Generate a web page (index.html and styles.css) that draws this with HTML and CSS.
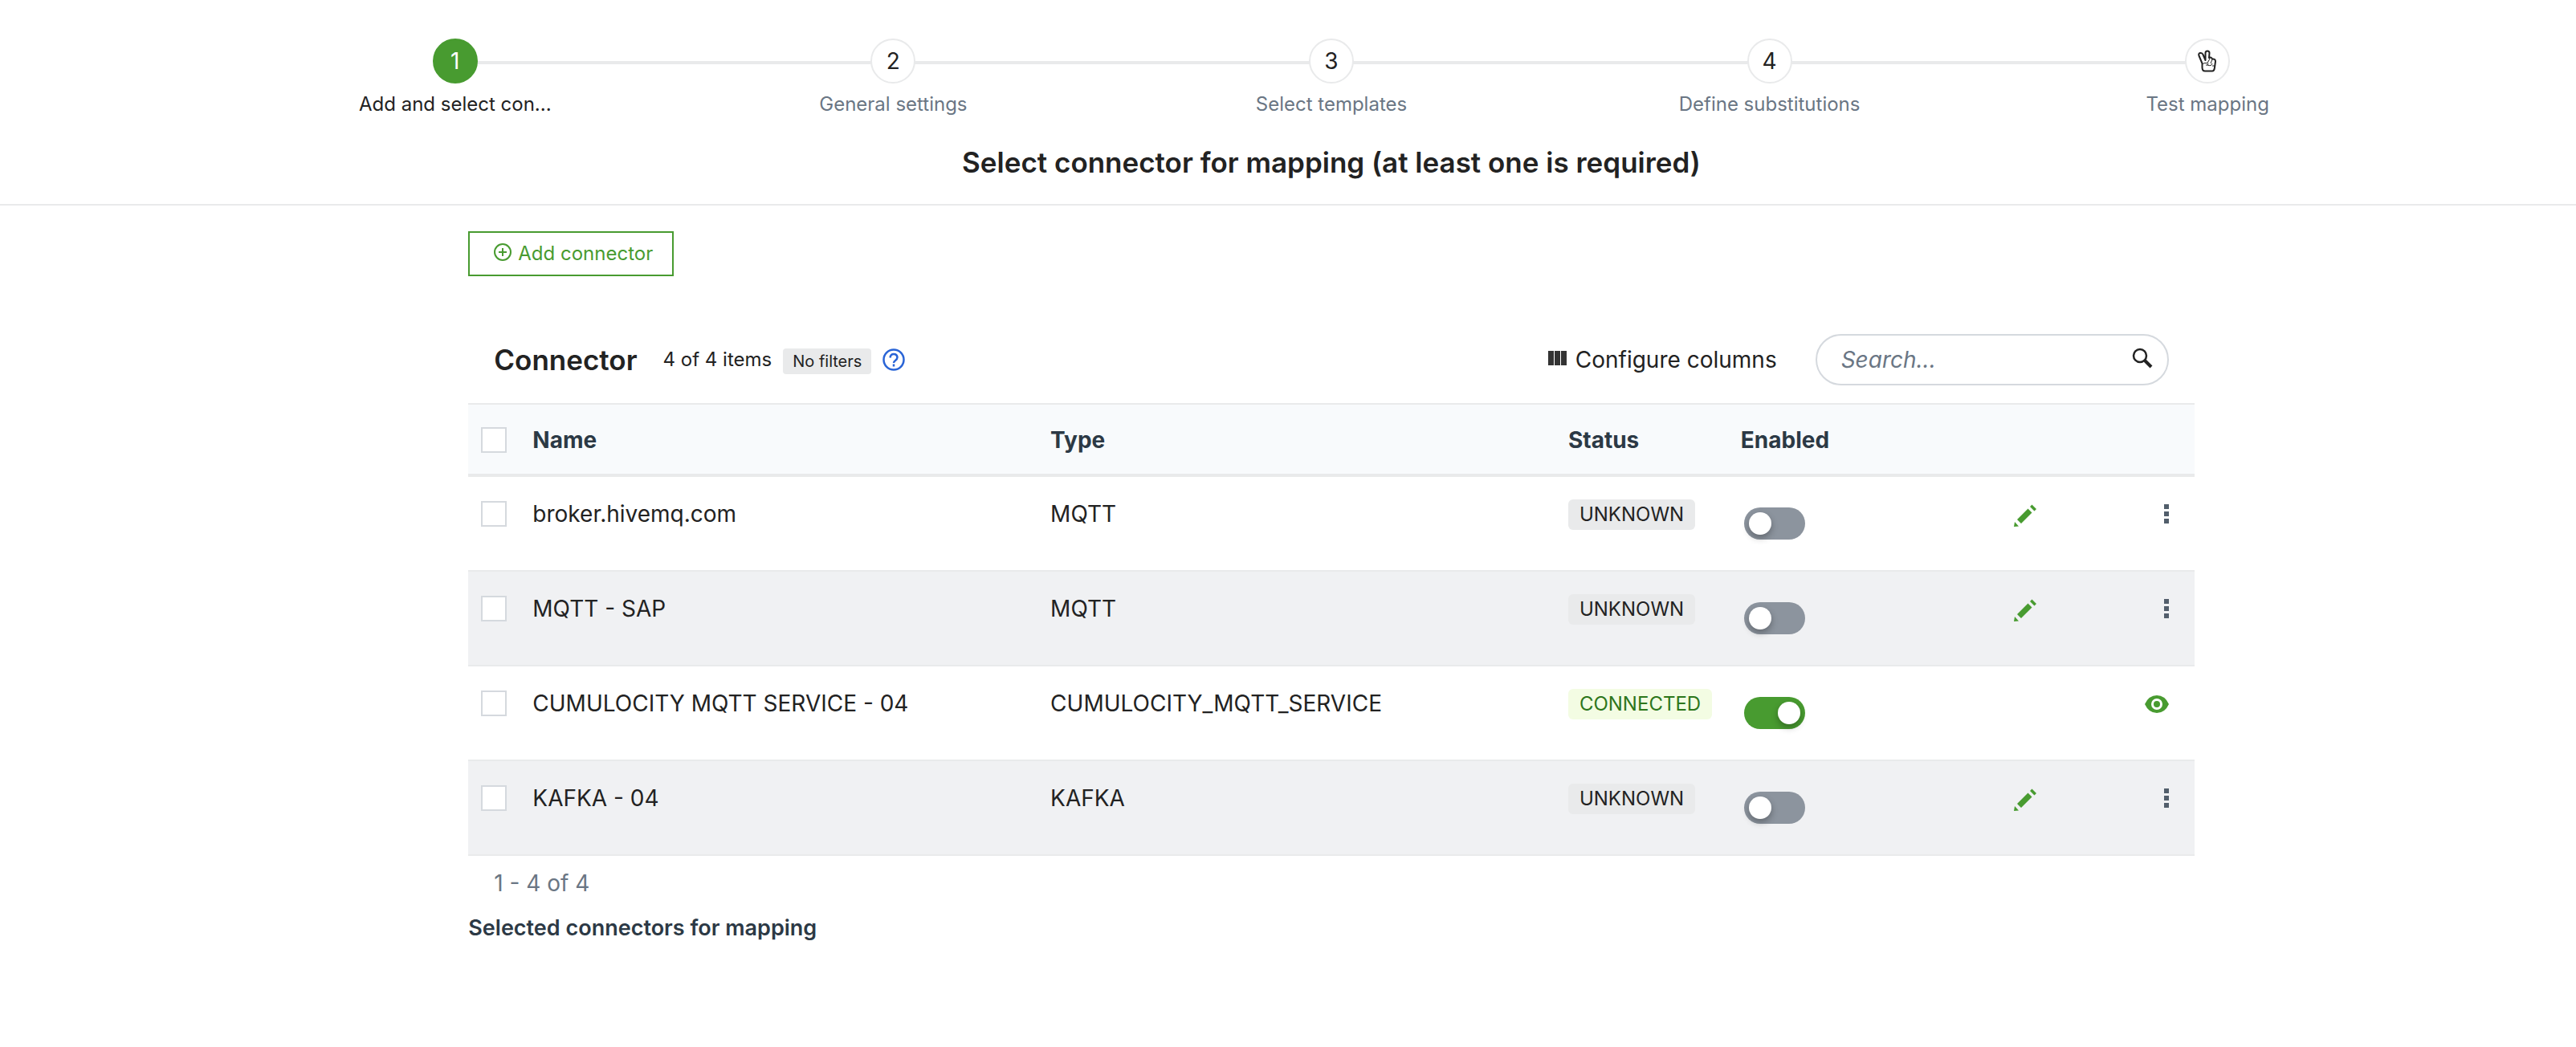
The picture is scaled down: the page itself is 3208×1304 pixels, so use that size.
FILE: index.html
```html
<!DOCTYPE html>
<html lang="en">
<head>
<meta charset="utf-8">
<title>Select connector for mapping</title>
<link rel="stylesheet" href="styles.css">
</head>
<body>
<svg class="sprite" aria-hidden="true">
  <symbol id="pencil" viewBox="0 0 28 28"><path d="M0 28l1-6 5 5.500zM4 19L17.500 5.500l5 5L9 24zM20 3l2.500-2.500 5.500 5.500-2.500 2.500z"/></symbol>
  <symbol id="dots" viewBox="0 0 6 24"><path d="M0 0h6v6H0zM0 9h6v6H0zM0 18h6v6H0z"/></symbol>
</svg>
<header class="header">
  <ol class="stepper">
    <li class="step active"><button class="step-dot" aria-labelledby="s1">1</button><span class="step-label" id="s1">Add and select con...</span></li>
    <li class="step"><button class="step-dot" aria-labelledby="s2">2</button><span class="step-label" id="s2">General settings</span></li>
    <li class="step"><button class="step-dot" aria-labelledby="s3">3</button><span class="step-label" id="s3">Select templates</span></li>
    <li class="step"><button class="step-dot" aria-labelledby="s4">4</button><span class="step-label" id="s4">Define substitutions</span></li>
    <li class="step"><button class="step-dot" aria-labelledby="s5"><svg class="hand" viewBox="0 0 24 28"><path class="outline" d="M5.500 17L1.500 7.500Q0.500 4.500 3 4T6.500 6L9.500 13V4Q9.500 1.500 12 1.500T14.500 4L14 10Q17 8.500 18 11.500 22 11 22 14.500L21 22Q20.500 26.500 18 26.500H9Q5.500 26.500 5.500 22z"/><path class="crease" d="M5.500 18Q7 16 12 16.500L15 11M12 16.500Q14 18 12 19H10M12 19Q17 21 18 17M18 12L16 17M21 20L18 20"/></svg></button><span class="step-label" id="s5">Test mapping</span></li>
  </ol>
  <h1 class="page-title">Select connector for mapping (at least one is required)</h1>
</header>
<main class="content">
  <button class="add"><svg class="add-icon" viewBox="0 0 22 22"><circle cx="11" cy="11" r="10"/><path d="M11 6v10M6 11h10"/></svg>Add connector</button>
  <section class="grid">
    <div class="toolbar">
      <h2 class="grid-title">Connector</h2>
      <span class="count">4 of 4 items</span>
      <span class="filters">No filters</span>
      <button class="plain help" aria-label="Help"><svg class="help-icon" viewBox="0 0 28 28"><circle cx="14" cy="14" r="12.500"/><path d="M9.500 11.500Q10 7 14 7t4.500 4q0 2-2.500 4-2 1.500-2 3M14 19.500v3"/></svg></button>
      <button class="plain configure"><svg class="columns-icon" viewBox="0 0 24 18"><path d="M0 0h7v18H0zM8 0h7v18H8zM16 0h7v18h-7z"/></svg>Configure columns</button>
      <label class="search"><input class="search-input" type="text" placeholder="Search..." aria-label="Search"><svg class="search-icon" viewBox="0 0 26 26"><circle cx="10" cy="10" r="8"/><path class="handle" d="M16 16l8 8"/></svg></label>
    </div>
    <table class="table">
      <colgroup><col class="c-check"><col class="c-name"><col class="c-type"><col class="c-status"><col class="c-enabled"><col class="c-edit"><col class="c-more"></colgroup>
      <thead><tr><th><input class="check" type="checkbox" aria-label="Select all"></th><th>Name</th><th>Type</th><th>Status</th><th>Enabled</th><th></th><th></th></tr></thead>
      <tbody>
        <tr><td><input class="check" type="checkbox" aria-label="Select broker.hivemq.com"></td><td>broker.hivemq.com</td><td>MQTT</td><td><span class="tag">UNKNOWN</span></td><td><input class="switch" type="checkbox" aria-label="Enable broker.hivemq.com"></td><td><button class="plain" aria-label="Edit"><svg class="pencil"><use href="#pencil"/></svg></button></td><td class="more"><button class="plain" aria-label="More"><svg class="dots"><use href="#dots"/></svg></button></td></tr>
        <tr><td><input class="check" type="checkbox" aria-label="Select MQTT - SAP"></td><td>MQTT - SAP</td><td>MQTT</td><td><span class="tag">UNKNOWN</span></td><td><input class="switch" type="checkbox" aria-label="Enable MQTT - SAP"></td><td><button class="plain" aria-label="Edit"><svg class="pencil"><use href="#pencil"/></svg></button></td><td class="more"><button class="plain" aria-label="More"><svg class="dots"><use href="#dots"/></svg></button></td></tr>
        <tr><td><input class="check" type="checkbox" aria-label="Select CUMULOCITY MQTT SERVICE - 04"></td><td>CUMULOCITY MQTT SERVICE - 04</td><td>CUMULOCITY_MQTT_SERVICE</td><td><span class="tag connected">CONNECTED</span></td><td><input class="switch" type="checkbox" checked aria-label="Enable CUMULOCITY MQTT SERVICE - 04"></td><td></td><td class="more"><button class="plain" aria-label="View"><svg class="eye" viewBox="0 0 30 22"><path fill-rule="evenodd" d="M0 11Q5 0 15 0t15 11q-5 11-15 11T0 11zM15 4a7 7 0 1 0 0 14 7 7 0 1 0 0-14z"/><circle cx="15" cy="11" r="4"/></svg></button></td></tr>
        <tr><td><input class="check" type="checkbox" aria-label="Select KAFKA - 04"></td><td>KAFKA - 04</td><td>KAFKA</td><td><span class="tag">UNKNOWN</span></td><td><input class="switch" type="checkbox" aria-label="Enable KAFKA - 04"></td><td><button class="plain" aria-label="Edit"><svg class="pencil"><use href="#pencil"/></svg></button></td><td class="more"><button class="plain" aria-label="More"><svg class="dots"><use href="#dots"/></svg></button></td></tr>
      </tbody>
    </table>
    <p class="pager">1 - 4 of 4</p>
  </section>
  <h3 class="selected-title">Selected connectors for mapping</h3>
</main>
</body>
</html>
```
FILE: styles.css
```css
* { box-sizing: border-box; }
body { margin: 0; background: #fff; color: #222; font: 28px/40px Inter, "Liberation Sans", sans-serif; }
button, input { font: inherit; color: inherit; }
h1, h2, h3, p, ol { margin: 0; padding: 0; }
.sprite { display: none; }
.plain { display: inline-flex; align-items: center; padding: 0; border: 0; background: none; }

.header { padding: 48px 0 28px 108px; border-bottom: 2px solid #e9eaeb; }
.stepper { display: flex; width: 88%; margin: 0 auto; list-style: none; }
.step { flex: 1; display: flex; flex-direction: column; align-items: center; position: relative; color: #6a7684; font-size: 24px; line-height: 32px; }
.step + .step::before { content: ""; position: absolute; top: 28px; right: 50%; width: 100%; height: 4px; background: #e9eaeb; }
.step-dot { position: relative; z-index: 1; display: flex; align-items: center; justify-content: center; width: 56px; height: 56px; margin-bottom: 10px; padding: 0; border: 2px solid #e9eaeb; border-radius: 50%; background: #fff; color: #222; font-size: 28px; }
.active { color: #222; }
.active .step-dot { border-color: #489b30; background: #489b30; color: #fff; }
.hand { width: 24px; height: 28px; fill: none; stroke: #222; stroke-linejoin: round; }
.outline { stroke-width: 2; }
.crease { stroke-width: 1; }
.page-title { margin-top: 32px; font-size: 35px; line-height: 48px; font-weight: 600; text-align: center; }

.content { width: 67%; margin-left: calc(16.5% + 54px); padding-top: 32px; }
.add { display: flex; align-items: center; gap: 8px; height: 56px; padding: 0 24px 0 30px; border: 2px solid #489b30; background: #fff; color: #489b30; font-size: 24px; }
.add-icon { width: 22px; height: 22px; margin-bottom: 4px; fill: none; stroke: currentColor; stroke-width: 2; }
.grid { margin-top: 56px; }
.toolbar { display: flex; align-items: center; padding: 16px 32px 22px; }
.grid-title { margin-right: 32px; font-size: 35px; font-weight: 600; }
.count { font-size: 24px; }
.filters { margin: 4px 14px 0; padding: 0 12px; border-radius: 4px; background: #e9eaeb; font-size: 20px; line-height: 32px; }
.help-icon { width: 28px; height: 28px; fill: none; stroke: #2964d6; stroke-width: 2.500; }
.configure { gap: 10px; margin: 0 48px 0 auto; }
.columns-icon { width: 24px; height: 18px; margin-bottom: 4px; fill: #333; }
.search { display: flex; align-items: center; width: 440px; height: 64px; padding: 0 18px 0 30px; border: 2px solid #d5d9de; border-radius: 32px; }
.search-input { flex: 1; min-width: 0; padding: 0; border: 0; outline: 0; background: none; }
.search-input::placeholder { color: #6a7684; font-style: italic; opacity: 1; }
.search-icon { width: 26px; height: 26px; margin-bottom: 4px; fill: none; stroke: #222; stroke-width: 2.500; }
.handle { stroke-width: 4; }

.table { width: 100%; table-layout: fixed; border-collapse: separate; border-spacing: 0; }
.c-check { width: 64px; }
.c-name, .c-type { width: 30%; }
.c-status { width: 10%; }
.c-enabled { width: 340px; }
.c-edit { width: 100px; }
th, td { padding: 0 16px; text-align: left; }
th { height: 92px; padding-top: 2px; border: solid #e9eaeb; border-width: 2px 0 4px; background: #f8fafc; color: #2c3945; font-weight: 700; }
td { height: 118px; padding-top: 26px; border-bottom: 2px solid #e9eaeb; vertical-align: top; white-space: nowrap; }
tbody tr:nth-child(even) { background: #f0f1f3; }
.check { appearance: none; display: block; width: 32px; height: 32px; margin: 4px 0; border: 2px solid #d5d9de; background: #fff; }
.tag { display: block; width: max-content; margin-top: 2px; padding: 0 14px; border-radius: 6px; background: #e9eaeb; font-size: 24px; line-height: 38px; }
.connected { background: #f3fce3; color: #2d761b; }
.switch { appearance: none; display: block; width: 76px; height: 40px; margin: 12px 0 0 4px; padding: 6px; border-radius: 20px; background: #8c949e; }
.switch::before { content: ""; display: block; width: 28px; height: 28px; border-radius: 50%; background: #fff; box-shadow: 0 4px 8px rgba(0, 0, 0, .3); }
.switch:checked { background: #489b30; }
.switch:checked::before { margin-left: auto; }
.pencil { width: 28px; height: 28px; margin-top: 8px; fill: #489b30; }
.more { padding-right: 32px; text-align: right; }
.dots { width: 6px; height: 24px; margin-top: 8px; fill: #525e6b; }
.eye { width: 30px; height: 22px; margin-top: 10px; fill: #489b30; }
.pager { padding: 14px 32px 0; color: #6a7684; }
.selected-title { margin-top: 16px; color: #2c3945; font-size: 27px; font-weight: 600; }
```
